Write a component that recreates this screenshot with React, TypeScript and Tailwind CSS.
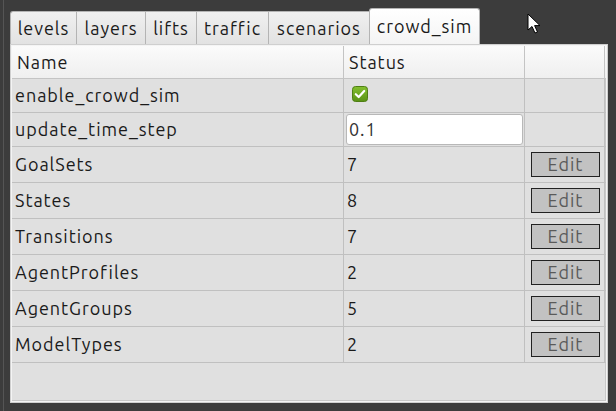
import React from "react";

type Row = { name: string; value?: string; kind: "check" | "input" | "edit" };

const rows: Row[] = [
  { name: "enable_crowd_sim", kind: "check" },
  { name: "update_time_step", value: "0.1", kind: "input" },
  { name: "GoalSets", value: "7", kind: "edit" },
  { name: "States", value: "8", kind: "edit" },
  { name: "Transitions", value: "7", kind: "edit" },
  { name: "AgentProfiles", value: "2", kind: "edit" },
  { name: "AgentGroups", value: "5", kind: "edit" },
  { name: "ModelTypes", value: "2", kind: "edit" },
];

const tabs = [
  { label: "levels", w: "w-[66px]" },
  { label: "layers", w: "w-[69px]" },
  { label: "lifts", w: "w-[51px]" },
  { label: "traffic", w: "w-[72px]" },
  { label: "scenarios", w: "w-[101px]" },
];

const CheckBox = () => (
  <svg width="16" height="16" viewBox="0 0 16 16">
    <defs>
      <linearGradient id="cb" x1="0" y1="0" x2="0" y2="1">
        <stop offset="0" stopColor="#84c02f" />
        <stop offset="1" stopColor="#5a9216" />
      </linearGradient>
    </defs>
    <rect x="0.5" y="0.5" width="15" height="15" rx="3" fill="url(#cb)" stroke="#4f7f14" />
    <path d="M3.8 8.2 L6.7 11 L12.2 5" fill="none" stroke="#fff" strokeWidth="2.2" strokeLinecap="round" strokeLinejoin="round" />
  </svg>
);

const Cursor = () => (
  <svg width="16" height="22" viewBox="0 0 16 22" className="absolute left-[527px] top-[13px]">
    <path d="M1 1 L1 17 L5 13.5 L8 20 L10.5 19 L7.6 12.6 L13 12.6 Z" fill="#fff" stroke="#000" strokeWidth="1" strokeLinejoin="round" />
  </svg>
);

export default function App() {
  return (
    <div className="relative w-[616px] h-[411px] overflow-hidden bg-[#3c3c3c] font-['Ubuntu','Noto_Sans','DejaVu_Sans',sans-serif] tracking-[0.06em] text-[#1a1a1a]">
      <div className="absolute left-[3px] top-0 h-full w-px bg-[#555555]" />
      <div className="pl-[10px] pt-[8px]">
        {/* tab bar */}
        <div className="flex items-end h-[36px]">
          {tabs.map((t) => (
            <div
              key={t.label}
              className={`${t.w} h-[33px] flex items-center justify-center border-l border-t border-[#b4b4b4] first:rounded-tl-[3px] bg-gradient-to-b from-[#f0f0f0] to-[#e2e2e2] text-[18px] leading-none pb-[1px]`}
            >
              {t.label}
            </div>
          ))}
          <div className="w-[111px] h-[36px] flex items-center justify-center border border-b-0 border-[#b4b4b4] rounded-t-[3px] bg-gradient-to-b from-[#ffffff] to-[#f4f4f4] text-[18px] leading-none pb-[2px]">
            crowd_sim
          </div>
        </div>
        {/* pane */}
        <div className="w-[598px] h-[359px] border border-[#cfcfcf] bg-[#f4f4f4] p-px">
          <div className="h-full bg-[#e0e0e0] border-r border-b border-[#c8c8c8] flex flex-col">
            <div className="w-[594px] flex h-[33px] bg-gradient-to-b from-[#fbfbfb] to-[#efefef] border-b border-[#c4c4c4] text-[18px]">
              <div className="w-[332px] flex items-center pl-[5px] border-r border-[#c4c4c4]">Name</div>
              <div className="w-[181px] flex items-center pl-[5px] border-r border-[#c4c4c4]">Status</div>
              <div className="w-[80px] border-r border-[#c4c4c4]" />
            </div>
            {rows.map((r, i) => (
              <div
                key={r.name}
                className={`w-[594px] flex border-b border-[#c0c0c0] text-[18px] ${i < 2 ? "h-[34px]" : "h-[36px]"}`}
              >
                <div className="w-[332px] flex items-center pl-[3px] border-r border-[#c0c0c0]">{r.name}</div>
                <div className="w-[181px] flex items-center border-r border-[#c0c0c0]">
                  {r.kind === "check" && (
                    <div className="pl-[8px] pb-[3px]">
                      <CheckBox />
                    </div>
                  )}
                  {r.kind === "input" && (
                    <div className="ml-[2px] w-[177px] h-[31px] bg-white border border-[#b8b8b8] rounded-[3px] flex items-center pl-[2px] text-[#333]">
                      {r.value}
                    </div>
                  )}
                  {r.kind === "edit" && <span className="pl-[3px]">{r.value}</span>}
                </div>
                <div className="w-[80px] flex items-center border-r border-[#c0c0c0]">
                  {r.kind === "edit" && (
                    <div className="ml-[6px] w-[69px] h-[25px] bg-[#c2c2c2] border border-[#222222] flex items-center justify-center text-[18px] text-[#5a5a5a]">
                      Edit
                    </div>
                  )}
                </div>
              </div>
            ))}
          </div>
        </div>
      </div>
      <Cursor />
    </div>
  );
}
